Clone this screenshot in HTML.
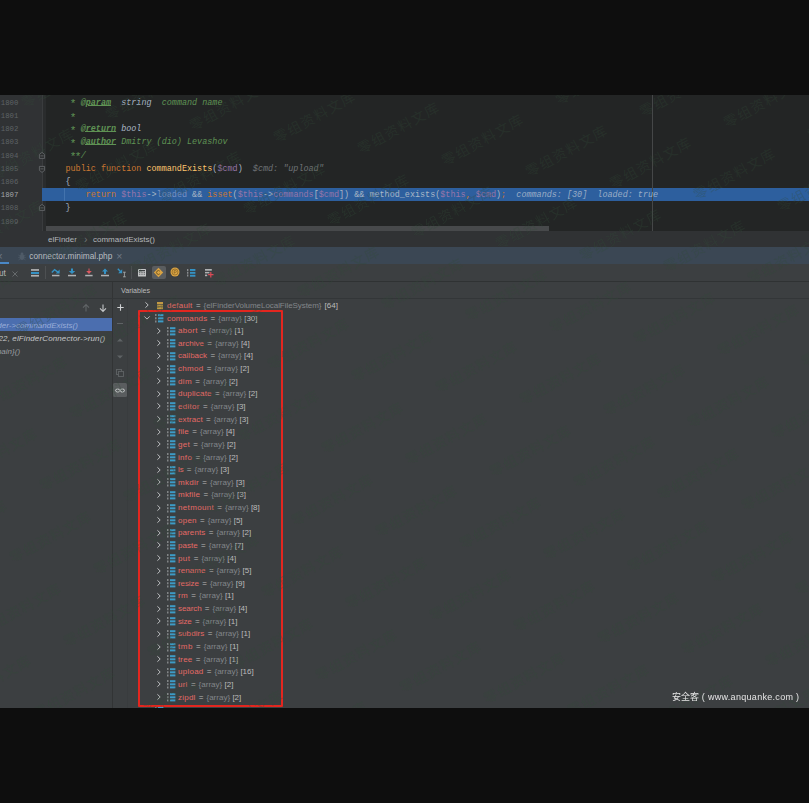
<!DOCTYPE html>
<html>
<head>
<meta charset="utf-8">
<title>debug</title>
<style>
html,body{margin:0;padding:0;}
body{width:809px;height:803px;background:#0e0e0e;position:relative;overflow:hidden;font-family:"Liberation Sans","Noto Sans CJK SC",sans-serif;}
.abs{position:absolute;}
#shot{position:absolute;left:0;top:95px;width:809px;height:613px;background:#3c3f41;overflow:hidden;filter:blur(0.35px);}
#editor{position:absolute;left:0;top:0;width:809px;height:136px;background:#232525;}
#gutter{position:absolute;left:0;top:0;width:41.5px;height:136px;background:#303234;border-right:1.3px solid #3a3c3e;}
.ln{position:absolute;left:0.8px;font:7.3px/13px "Liberation Mono",monospace;color:#5e6366;white-space:pre;height:13px;}
.code{position:absolute;left:45.2px;font:8.45px/13px "Liberation Mono",monospace;color:#a9b7c6;white-space:pre;height:13px;}
.g{color:#5f9354;font-style:italic;}
.tag{color:#5f9354;font-style:italic;font-weight:bold;text-decoration:underline;text-underline-offset:0.3px;text-decoration-thickness:0.8px;}
.st{position:relative;top:2.6px;font-style:normal;font-size:11px;display:inline-block;width:5.07px;line-height:8px;text-indent:-0.8px;}
.ty{color:#a9b7c6;font-style:italic;}
.k{color:#cc7832;}
.f{color:#ffc66d;}
.v{color:#9876aa;}
.h{color:#6f7376;font-style:italic;}
.hl{color:#9aadc6;font-style:italic;}
#hlrow{position:absolute;left:42px;top:93px;width:767px;height:13px;background:#2d5f9e;}
#margin{position:absolute;left:652px;top:0;width:1px;height:136px;background:#454748;}
#indent{position:absolute;left:64px;top:93px;width:1px;height:13px;background:#4373ad;}
#gstrip{position:absolute;left:42.8px;top:0;width:3.2px;height:136px;background:#2a2c2d;}
#hscroll{position:absolute;left:46px;top:131.4px;width:503px;height:4.6px;background:#47494b;}
#crumbs{position:absolute;left:0;top:136px;width:809px;height:16px;background:#303234;font-size:8px;line-height:18px;color:#b4b8bb;white-space:pre;}
#tabs{position:absolute;left:0;top:152px;width:809px;height:17px;background:#3b4754;font-size:8.3px;line-height:18.4px;color:#b9bdc1;white-space:pre;}
#toolbar{position:absolute;left:0;top:169px;width:809px;height:18px;background:#3c3f41;}
.row{position:absolute;font-size:8px;line-height:12px;height:12px;white-space:pre;color:#bbbbbb;word-spacing:1.2px;}
.row span{position:absolute;top:0;}
.n{color:#e56a66;}
.a{color:#82868a;}
.c{color:#bbbbbb;}
svg{position:absolute;overflow:visible;}
#wm{position:absolute;left:0;top:0;width:809px;height:613px;overflow:hidden;pointer-events:none;}
#wm span{position:absolute;font:14px/14px "Liberation Sans","Noto Sans CJK SC",sans-serif;letter-spacing:1.2px;color:rgba(50,76,56,0.3);white-space:pre;transform-origin:0 100%;transform:rotate(-28.6deg);}
</style>
</head>
<body>
<div id="shot">
<div id="editor">
<div id="gutter"></div>
<div id="gstrip"></div>
<div id="hlrow"></div>
<div id="margin"></div>
<div id="indent"></div>
<div class="ln" style="top:1.8px;color:#5e6366">1800</div>
<div class="code" style="top:1.8px">     <span class="g"><span class="st">*</span> </span><span class="tag">@param</span><span class="ty">  string  </span><span class="g">command name</span></div>
<div class="ln" style="top:15.0px;color:#5e6366">1801</div>
<div class="code" style="top:15.0px">     <span class="g"><span class="st">*</span></span></div>
<div class="ln" style="top:28.2px;color:#5e6366">1802</div>
<div class="code" style="top:28.2px">     <span class="g"><span class="st">*</span> </span><span class="tag">@return</span><span class="ty"> bool</span></div>
<div class="ln" style="top:41.4px;color:#5e6366">1803</div>
<div class="code" style="top:41.4px">     <span class="g"><span class="st">*</span> </span><span class="tag">@author</span><span class="g"> Dmitry (dio) Levashov</span></div>
<div class="ln" style="top:54.6px;color:#5e6366">1804</div>
<div class="code" style="top:54.6px">     <span class="g"><span class="st">*</span><span class="st">*</span>/</span></div>
<div class="ln" style="top:67.8px;color:#5e6366">1805</div>
<div class="code" style="top:67.8px">    <span class="k">public function </span><span class="f">commandExists</span>(<span class="v">$cmd</span>)  <span class="h">$cmd: "upload"</span></div>
<div class="ln" style="top:81.0px;color:#5e6366">1806</div>
<div class="code" style="top:81.0px">    {</div>
<div class="ln" style="top:94.2px;color:#a4a8ab">1807</div>
<div class="code" style="top:94.2px">        <span class="k">return </span><span class="v">$this</span>-&gt;<span style="color:#7a93c6">loaded</span> &amp;&amp; <span class="k">isset</span>(<span class="v">$this</span>-&gt;<span class="v">commands</span>[<span class="v">$cmd</span>]) &amp;&amp; method_exists(<span class="v">$this</span><span class="k">, </span><span class="v">$cmd</span>)<span class="k">;</span>  <span class="hl">commands: [30]  loaded: true</span></div>
<div class="ln" style="top:107.4px;color:#5e6366">1808</div>
<div class="code" style="top:107.4px">    }</div>
<div class="ln" style="top:120.6px;color:#5e6366">1809</div>
<svg style="left:39px;top:56.5px" width="6" height="7" viewBox="0 0 6 7"><path d="M0.4 6.4V2.4L3 0.4L5.6 2.4V6.4Z" fill="#2b2d2e" stroke="#6a6d70" stroke-width="0.8"/><path d="M1.4 3.9H4.6" stroke="#6a6d70" stroke-width="0.8"/></svg>
<svg style="left:39px;top:71px" width="6" height="7" viewBox="0 0 6 7"><path d="M0.4 0.4V4.4L3 6.4L5.6 4.4V0.4Z" fill="#2b2d2e" stroke="#6a6d70" stroke-width="0.8"/><path d="M1.4 2.9H4.6" stroke="#6a6d70" stroke-width="0.8"/></svg>
<svg style="left:39px;top:109.3px" width="6" height="7" viewBox="0 0 6 7"><path d="M0.4 6.4V2.4L3 0.4L5.6 2.4V6.4Z" fill="#2b2d2e" stroke="#6a6d70" stroke-width="0.8"/><path d="M1.4 3.9H4.6" stroke="#6a6d70" stroke-width="0.8"/></svg>
<div id="hscroll"></div>
</div>
<div id="crumbs"><span class="abs" style="left:48px">elFinder</span><span class="abs" style="left:84px;top:-1.4px;font-size:10.5px;color:#6e7275">›</span><span class="abs" style="left:93px">commandExists()</span></div>
<div id="tabs"><svg style="left:17.5px;top:4.5px" width="8" height="9" viewBox="0 0 8 9"><ellipse cx="4" cy="5" rx="2.3" ry="3" fill="#4f5b68"/><circle cx="4" cy="1.8" r="1.4" fill="#4f5b68"/><path d="M0.4 3L2 4M7.6 3L6 4M0.2 5.4H1.8M7.8 5.4H6.2M0.5 8L2 6.8M7.5 8L6 6.8" stroke="#4f5b68" stroke-width="0.7" fill="none"/></svg><span class="abs" style="left:29.3px">connector.minimal.php</span><span class="abs" style="left:116.3px;top:-0.3px;font-size:10.5px;color:#6f7984">×</span><span class="abs" style="left:-3.5px;top:-0.3px;font-size:10.5px;color:#6f7984">×</span><div class="abs" style="left:0;top:15px;width:9px;height:2px;background:#4a88c7"></div></div>
<div id="toolbar">
<div class="abs" style="left:0;top:17px;width:809px;height:1px;background:#2f3233"></div>
<span class="abs" style="left:-1px;top:3px;font-size:8.3px;line-height:12px;color:#bbbbbb">ut</span>
<svg style="left:12px;top:7px" width="6" height="6" viewBox="0 0 6 6"><path d="M0.5 0.5L5.5 5.5M5.5 0.5L0.5 5.5" stroke="#6b6f72" stroke-width="0.9" fill="none"/></svg>
<svg style="left:31px;top:5px" width="8" height="8" viewBox="0 0 8 8"><rect x="0" y="0.1" width="8" height="1.7" fill="#afb1b3"/><rect x="0" y="3" width="8" height="2" fill="#3592c4"/><rect x="0" y="5.9" width="8" height="1.7" fill="#afb1b3"/></svg>
<div class="abs" style="left:45px;top:2px;width:1px;height:13px;background:#4d5052"></div>
<svg style="left:51px;top:4px" width="10" height="9" viewBox="0 0 10 9"><path d="M0.8 4.6L3.6 1.6L7.6 4.6" stroke="#3592c4" stroke-width="1.4" fill="none"/><path d="M8.6 1.6V5.6H4.8Z" fill="#3592c4"/><rect x="1" y="6.8" width="7.5" height="1.5" fill="#afb1b3"/></svg>
<svg style="left:68px;top:4px" width="8" height="9" viewBox="0 0 8 9"><path d="M3 0.4H5V3H7.2L4 6L0.8 3H3Z" fill="#3592c4"/><rect x="0" y="6.8" width="8" height="1.5" fill="#afb1b3"/></svg>
<svg style="left:84.5px;top:4px" width="8" height="9" viewBox="0 0 8 9"><path d="M3.5 0.4H4.5V3H6.8L4 6L1.2 3H3.5Z" fill="#db5860"/><rect x="0.2" y="6.8" width="7.4" height="1.5" fill="#afb1b3"/></svg>
<svg style="left:101px;top:4px" width="8" height="9" viewBox="0 0 8 9"><path d="M3 6H5V3.4H7L4 0.4L1 3.4H3Z" fill="#3592c4"/><rect x="0" y="6.8" width="8" height="1.5" fill="#afb1b3"/></svg>
<svg style="left:117px;top:4px" width="10" height="10" viewBox="0 0 10 10"><path d="M0.8 0.8L4 4" stroke="#3592c4" stroke-width="1.4" fill="none"/><path d="M5.2 1.2V5.2H1.2Z" fill="#3592c4"/><path d="M6 4.2H8.8M6 8.8H8.8M7.4 4.2V8.8" stroke="#afb1b3" stroke-width="0.8" fill="none"/></svg>
<div class="abs" style="left:131.3px;top:2px;width:1px;height:13px;background:#4d5052"></div>
<svg style="left:138px;top:5px" width="8" height="8" viewBox="0 0 8 8"><rect x="0" y="0" width="8" height="7.6" rx="0.6" fill="#c3c5c6"/><rect x="1" y="1" width="6" height="1.2" fill="#3c3f41"/><path d="M1 3.4H7M1 5.2H7" stroke="#3c3f41" stroke-width="0.7" stroke-dasharray="1.4 0.9"/></svg>
<div class="abs" style="left:152px;top:2px;width:14px;height:13px;background:#5a5d5f;border-radius:2px"></div>
<svg style="left:153.2px;top:2.9px" width="11" height="11" viewBox="0 0 11 11"><path d="M5.5 0.8L10.2 5.5L5.5 10.2L0.8 5.5Z" fill="#d9a343"/><path d="M6.8 4.2A1.9 1.9 0 1 0 6.8 6.8" stroke="#6b5222" stroke-width="0.9" fill="none"/></svg>
<svg style="left:170.4px;top:3.4px" width="10" height="10" viewBox="0 0 10 10"><circle cx="5" cy="5" r="4.5" fill="#d9a343"/><circle cx="5" cy="5" r="3" fill="none" stroke="#8a6626" stroke-width="0.7"/><path d="M4.2 6.8V3.4H5.4A1 1 0 0 1 5.4 5.4H4.2" stroke="#8a6626" stroke-width="0.7" fill="none"/></svg>
<svg style="left:187px;top:4.5px" width="9" height="8" viewBox="0 0 9 8"><path d="M0.7 0V7.6" stroke="#8e9193" stroke-width="1.3" stroke-dasharray="1.9 0.9"/><rect x="3" y="0" width="5.4" height="1.9" fill="#3592c4"/><rect x="3" y="2.9" width="5.4" height="1.9" fill="#3592c4"/><rect x="3" y="5.8" width="5.4" height="1.9" fill="#3592c4"/></svg>
<svg style="left:204.5px;top:5px" width="10" height="9" viewBox="0 0 10 9"><rect x="0" y="0" width="6.8" height="1.7" fill="#afb1b3"/><rect x="0" y="2.9" width="4.4" height="1.5" fill="#afb1b3"/><rect x="0" y="5.6" width="2.2" height="1.6" fill="#afb1b3"/><path d="M5.8 3V8.4M3.1 5.7H8.5" stroke="#db4a55" stroke-width="1.2" fill="none"/></svg>
</div>
<div class="abs" style="left:121px;top:190px;font-size:7.1px;line-height:12px;color:#bbbbbb">Variables</div>
<div class="abs" style="left:112px;top:187px;width:1px;height:426px;background:#323435"></div>
<div class="abs" style="left:0;top:203px;width:809px;height:1px;background:#333638"></div>
<div class="abs" style="left:127px;top:204px;width:1px;height:409px;background:#393c3e"></div>
<svg style="left:82px;top:208.5px" width="8" height="8" viewBox="0 0 8 8"><path d="M4 7.6V0.8M1 3.6L4 0.6L7 3.6" stroke="#606466" stroke-width="1.1" fill="none"/></svg>
<svg style="left:98.5px;top:208.5px" width="8" height="8" viewBox="0 0 8 8"><path d="M4 0.4V7.2M1 4.4L4 7.4L7 4.4" stroke="#c4c6c8" stroke-width="1.1" fill="none"/></svg>
<svg style="left:116.5px;top:209px" width="7" height="7" viewBox="0 0 7 7"><path d="M3.5 0.3V6.7M0.3 3.5H6.7" stroke="#d0d2d4" stroke-width="1.1" fill="none"/></svg>
<div class="abs" style="left:117px;top:228.3px;width:6px;height:1px;background:#5f6365"></div>
<svg style="left:117px;top:242.8px" width="6" height="4" viewBox="0 0 6 4"><path d="M0 3.6L3 0.4L6 3.6Z" fill="#5f6365"/></svg>
<svg style="left:117px;top:259.5px" width="6" height="4" viewBox="0 0 6 4"><path d="M0 0.4L3 3.6L6 0.4Z" fill="#5f6365"/></svg>
<svg style="left:116px;top:274px" width="8" height="8" viewBox="0 0 8 8"><rect x="0.5" y="0.5" width="5" height="5" fill="none" stroke="#5f6365" stroke-width="0.9"/><rect x="2.5" y="2.5" width="5" height="5" fill="#3c3f41" stroke="#5f6365" stroke-width="0.9"/></svg>
<div class="abs" style="left:113.3px;top:288px;width:13.5px;height:13.5px;background:#5a5d5f;border-radius:1.5px"></div>
<svg style="left:115px;top:292.5px" width="10" height="5" viewBox="0 0 10 5"><ellipse cx="2.6" cy="2.5" rx="2" ry="1.6" fill="none" stroke="#d0d2d4" stroke-width="1"/><ellipse cx="7.4" cy="2.5" rx="2" ry="1.6" fill="none" stroke="#d0d2d4" stroke-width="1"/></svg>
<div class="abs" style="left:0;top:223px;width:112px;height:13px;background:#4b6eaf"></div>
<div class="abs" style="left:-2.7px;top:223.6px;font-size:8px;line-height:13px;color:#99add8;font-style:italic;white-space:pre">der-&gt;commandExists()</div>
<div class="abs" style="left:-1.5px;top:236.8px;font-size:8px;line-height:13px;color:#c4c6c8;font-style:italic;white-space:pre;letter-spacing:0.124px">22, elFinderConnector-&gt;run()</div>
<div class="abs" style="left:-5.3px;top:250px;font-size:8px;line-height:13px;color:#9a9da0;font-style:italic;white-space:pre">main}()</div>
<svg style="left:144.6px;top:207.0px" width="4" height="6" viewBox="0 0 4 6"><path d="M0.4 0.3L3.2 3L0.4 5.7" stroke="#bcbec0" stroke-width="1" fill="none"/></svg>
<svg style="left:157px;top:206.9px" width="6" height="8" viewBox="0 0 6 8"><rect x="0" y="0" width="6" height="2" fill="#c29a44"/><rect x="0" y="2.6" width="6" height="2" fill="#c29a44"/><rect x="0" y="5.2" width="6" height="2" fill="#c29a44"/></svg>
<div class="row" style="left:0;top:204.5px"><span class="n" style="left:167px;letter-spacing:0.220px">default</span><span class="c" style="left:195.9px">=</span><span class="a" style="left:203.6px;letter-spacing:-0.056px">{elFinderVolumeLocalFileSystem}</span><span class="c" style="left:324.6px">[64]</span></div>
<svg style="left:144px;top:220.6px" width="6" height="4" viewBox="0 0 6 4"><path d="M0.3 0.4L3 3.1L5.7 0.4" stroke="#bcbec0" stroke-width="1" fill="none"/></svg>
<svg style="left:155.2px;top:219.0px" width="9" height="9" viewBox="0 0 9 9"><path d="M0.8 0V8.6" stroke="#8e9193" stroke-width="1.3" stroke-dasharray="2 1.2"/><rect x="3" y="0.2" width="5.4" height="2" fill="#3d9bc6"/><rect x="3" y="3.3" width="5.4" height="2" fill="#3d9bc6"/><rect x="3" y="6.4" width="5.4" height="2" fill="#3d9bc6"/></svg>
<div class="row" style="left:0;top:217.5px"><span class="n" style="left:167px;letter-spacing:0.148px">commands</span><span class="c" style="left:210.6px">=</span><span class="a" style="left:218.3px;letter-spacing:0.000px">{array}</span><span class="c" style="left:244.2px">[30]</span></div>
<svg style="left:156.6px;top:232.6px" width="4" height="6" viewBox="0 0 4 6"><path d="M0.4 0.3L3.2 3L0.4 5.7" stroke="#bcbec0" stroke-width="1" fill="none"/></svg>
<svg style="left:167px;top:231.6px" width="9" height="9" viewBox="0 0 9 9"><path d="M0.8 0V8.6" stroke="#8e9193" stroke-width="1.3" stroke-dasharray="2 1.2"/><rect x="3" y="0.2" width="5.4" height="2" fill="#3d9bc6"/><rect x="3" y="3.3" width="5.4" height="2" fill="#3d9bc6"/><rect x="3" y="6.4" width="5.4" height="2" fill="#3d9bc6"/></svg>
<div class="row" style="left:0;top:230.1px"><span class="n" style="left:178px;letter-spacing:0.288px">abort</span><span class="c" style="left:201.0px">=</span><span class="a" style="left:208.7px;letter-spacing:0.000px">{array}</span><span class="c" style="left:234.6px">[1]</span></div>
<svg style="left:156.6px;top:245.3px" width="4" height="6" viewBox="0 0 4 6"><path d="M0.4 0.3L3.2 3L0.4 5.7" stroke="#bcbec0" stroke-width="1" fill="none"/></svg>
<svg style="left:167px;top:244.3px" width="9" height="9" viewBox="0 0 9 9"><path d="M0.8 0V8.6" stroke="#8e9193" stroke-width="1.3" stroke-dasharray="2 1.2"/><rect x="3" y="0.2" width="5.4" height="2" fill="#3d9bc6"/><rect x="3" y="3.3" width="5.4" height="2" fill="#3d9bc6"/><rect x="3" y="6.4" width="5.4" height="2" fill="#3d9bc6"/></svg>
<div class="row" style="left:0;top:242.8px"><span class="n" style="left:178px;letter-spacing:0.025px">archive</span><span class="c" style="left:207.3px">=</span><span class="a" style="left:215.0px;letter-spacing:0.000px">{array}</span><span class="c" style="left:240.9px">[4]</span></div>
<svg style="left:156.6px;top:257.9px" width="4" height="6" viewBox="0 0 4 6"><path d="M0.4 0.3L3.2 3L0.4 5.7" stroke="#bcbec0" stroke-width="1" fill="none"/></svg>
<svg style="left:167px;top:256.9px" width="9" height="9" viewBox="0 0 9 9"><path d="M0.8 0V8.6" stroke="#8e9193" stroke-width="1.3" stroke-dasharray="2 1.2"/><rect x="3" y="0.2" width="5.4" height="2" fill="#3d9bc6"/><rect x="3" y="3.3" width="5.4" height="2" fill="#3d9bc6"/><rect x="3" y="6.4" width="5.4" height="2" fill="#3d9bc6"/></svg>
<div class="row" style="left:0;top:255.4px"><span class="n" style="left:178px;letter-spacing:0.031px">callback</span><span class="c" style="left:210.4px">=</span><span class="a" style="left:218.1px;letter-spacing:0.000px">{array}</span><span class="c" style="left:244.0px">[4]</span></div>
<svg style="left:156.6px;top:270.5px" width="4" height="6" viewBox="0 0 4 6"><path d="M0.4 0.3L3.2 3L0.4 5.7" stroke="#bcbec0" stroke-width="1" fill="none"/></svg>
<svg style="left:167px;top:269.5px" width="9" height="9" viewBox="0 0 9 9"><path d="M0.8 0V8.6" stroke="#8e9193" stroke-width="1.3" stroke-dasharray="2 1.2"/><rect x="3" y="0.2" width="5.4" height="2" fill="#3d9bc6"/><rect x="3" y="3.3" width="5.4" height="2" fill="#3d9bc6"/><rect x="3" y="6.4" width="5.4" height="2" fill="#3d9bc6"/></svg>
<div class="row" style="left:0;top:268.0px"><span class="n" style="left:178px;letter-spacing:0.281px">chmod</span><span class="c" style="left:206.7px">=</span><span class="a" style="left:214.4px;letter-spacing:0.000px">{array}</span><span class="c" style="left:240.3px">[2]</span></div>
<svg style="left:156.6px;top:283.2px" width="4" height="6" viewBox="0 0 4 6"><path d="M0.4 0.3L3.2 3L0.4 5.7" stroke="#bcbec0" stroke-width="1" fill="none"/></svg>
<svg style="left:167px;top:282.2px" width="9" height="9" viewBox="0 0 9 9"><path d="M0.8 0V8.6" stroke="#8e9193" stroke-width="1.3" stroke-dasharray="2 1.2"/><rect x="3" y="0.2" width="5.4" height="2" fill="#3d9bc6"/><rect x="3" y="3.3" width="5.4" height="2" fill="#3d9bc6"/><rect x="3" y="6.4" width="5.4" height="2" fill="#3d9bc6"/></svg>
<div class="row" style="left:0;top:280.7px"><span class="n" style="left:178px;letter-spacing:0.382px">dim</span><span class="c" style="left:195.3px">=</span><span class="a" style="left:203.0px;letter-spacing:0.000px">{array}</span><span class="c" style="left:228.9px">[2]</span></div>
<svg style="left:156.6px;top:295.8px" width="4" height="6" viewBox="0 0 4 6"><path d="M0.4 0.3L3.2 3L0.4 5.7" stroke="#bcbec0" stroke-width="1" fill="none"/></svg>
<svg style="left:167px;top:294.8px" width="9" height="9" viewBox="0 0 9 9"><path d="M0.8 0V8.6" stroke="#8e9193" stroke-width="1.3" stroke-dasharray="2 1.2"/><rect x="3" y="0.2" width="5.4" height="2" fill="#3d9bc6"/><rect x="3" y="3.3" width="5.4" height="2" fill="#3d9bc6"/><rect x="3" y="6.4" width="5.4" height="2" fill="#3d9bc6"/></svg>
<div class="row" style="left:0;top:293.3px"><span class="n" style="left:178px;letter-spacing:0.185px">duplicate</span><span class="c" style="left:215.0px">=</span><span class="a" style="left:222.7px;letter-spacing:0.000px">{array}</span><span class="c" style="left:248.6px">[2]</span></div>
<svg style="left:156.6px;top:308.4px" width="4" height="6" viewBox="0 0 4 6"><path d="M0.4 0.3L3.2 3L0.4 5.7" stroke="#bcbec0" stroke-width="1" fill="none"/></svg>
<svg style="left:167px;top:307.4px" width="9" height="9" viewBox="0 0 9 9"><path d="M0.8 0V8.6" stroke="#8e9193" stroke-width="1.3" stroke-dasharray="2 1.2"/><rect x="3" y="0.2" width="5.4" height="2" fill="#3d9bc6"/><rect x="3" y="3.3" width="5.4" height="2" fill="#3d9bc6"/><rect x="3" y="6.4" width="5.4" height="2" fill="#3d9bc6"/></svg>
<div class="row" style="left:0;top:305.9px"><span class="n" style="left:178px;letter-spacing:0.298px">editor</span><span class="c" style="left:203.1px">=</span><span class="a" style="left:210.8px;letter-spacing:0.000px">{array}</span><span class="c" style="left:236.7px">[3]</span></div>
<svg style="left:156.6px;top:321.1px" width="4" height="6" viewBox="0 0 4 6"><path d="M0.4 0.3L3.2 3L0.4 5.7" stroke="#bcbec0" stroke-width="1" fill="none"/></svg>
<svg style="left:167px;top:320.1px" width="9" height="9" viewBox="0 0 9 9"><path d="M0.8 0V8.6" stroke="#8e9193" stroke-width="1.3" stroke-dasharray="2 1.2"/><rect x="3" y="0.2" width="5.4" height="2" fill="#3d9bc6"/><rect x="3" y="3.3" width="5.4" height="2" fill="#3d9bc6"/><rect x="3" y="6.4" width="5.4" height="2" fill="#3d9bc6"/></svg>
<div class="row" style="left:0;top:318.6px"><span class="n" style="left:178px;letter-spacing:0.103px">extract</span><span class="c" style="left:206.0px">=</span><span class="a" style="left:213.7px;letter-spacing:0.000px">{array}</span><span class="c" style="left:239.6px">[3]</span></div>
<svg style="left:156.6px;top:333.7px" width="4" height="6" viewBox="0 0 4 6"><path d="M0.4 0.3L3.2 3L0.4 5.7" stroke="#bcbec0" stroke-width="1" fill="none"/></svg>
<svg style="left:167px;top:332.7px" width="9" height="9" viewBox="0 0 9 9"><path d="M0.8 0V8.6" stroke="#8e9193" stroke-width="1.3" stroke-dasharray="2 1.2"/><rect x="3" y="0.2" width="5.4" height="2" fill="#3d9bc6"/><rect x="3" y="3.3" width="5.4" height="2" fill="#3d9bc6"/><rect x="3" y="6.4" width="5.4" height="2" fill="#3d9bc6"/></svg>
<div class="row" style="left:0;top:331.2px"><span class="n" style="left:178px;letter-spacing:0.183px">file</span><span class="c" style="left:192.3px">=</span><span class="a" style="left:200.0px;letter-spacing:0.000px">{array}</span><span class="c" style="left:225.9px">[4]</span></div>
<svg style="left:156.6px;top:346.3px" width="4" height="6" viewBox="0 0 4 6"><path d="M0.4 0.3L3.2 3L0.4 5.7" stroke="#bcbec0" stroke-width="1" fill="none"/></svg>
<svg style="left:167px;top:345.3px" width="9" height="9" viewBox="0 0 9 9"><path d="M0.8 0V8.6" stroke="#8e9193" stroke-width="1.3" stroke-dasharray="2 1.2"/><rect x="3" y="0.2" width="5.4" height="2" fill="#3d9bc6"/><rect x="3" y="3.3" width="5.4" height="2" fill="#3d9bc6"/><rect x="3" y="6.4" width="5.4" height="2" fill="#3d9bc6"/></svg>
<div class="row" style="left:0;top:343.8px"><span class="n" style="left:178px;letter-spacing:0.305px">get</span><span class="c" style="left:193.3px">=</span><span class="a" style="left:201.0px;letter-spacing:0.000px">{array}</span><span class="c" style="left:226.9px">[2]</span></div>
<svg style="left:156.6px;top:359.0px" width="4" height="6" viewBox="0 0 4 6"><path d="M0.4 0.3L3.2 3L0.4 5.7" stroke="#bcbec0" stroke-width="1" fill="none"/></svg>
<svg style="left:167px;top:358.0px" width="9" height="9" viewBox="0 0 9 9"><path d="M0.8 0V8.6" stroke="#8e9193" stroke-width="1.3" stroke-dasharray="2 1.2"/><rect x="3" y="0.2" width="5.4" height="2" fill="#3d9bc6"/><rect x="3" y="3.3" width="5.4" height="2" fill="#3d9bc6"/><rect x="3" y="6.4" width="5.4" height="2" fill="#3d9bc6"/></svg>
<div class="row" style="left:0;top:356.5px"><span class="n" style="left:178px;letter-spacing:0.316px">info</span><span class="c" style="left:195.5px">=</span><span class="a" style="left:203.2px;letter-spacing:0.000px">{array}</span><span class="c" style="left:229.1px">[2]</span></div>
<svg style="left:156.6px;top:371.6px" width="4" height="6" viewBox="0 0 4 6"><path d="M0.4 0.3L3.2 3L0.4 5.7" stroke="#bcbec0" stroke-width="1" fill="none"/></svg>
<svg style="left:167px;top:370.6px" width="9" height="9" viewBox="0 0 9 9"><path d="M0.8 0V8.6" stroke="#8e9193" stroke-width="1.3" stroke-dasharray="2 1.2"/><rect x="3" y="0.2" width="5.4" height="2" fill="#3d9bc6"/><rect x="3" y="3.3" width="5.4" height="2" fill="#3d9bc6"/><rect x="3" y="6.4" width="5.4" height="2" fill="#3d9bc6"/></svg>
<div class="row" style="left:0;top:369.1px"><span class="n" style="left:178px;letter-spacing:-0.124px">ls</span><span class="c" style="left:186.8px">=</span><span class="a" style="left:194.5px;letter-spacing:0.000px">{array}</span><span class="c" style="left:220.4px">[3]</span></div>
<svg style="left:156.6px;top:384.2px" width="4" height="6" viewBox="0 0 4 6"><path d="M0.4 0.3L3.2 3L0.4 5.7" stroke="#bcbec0" stroke-width="1" fill="none"/></svg>
<svg style="left:167px;top:383.2px" width="9" height="9" viewBox="0 0 9 9"><path d="M0.8 0V8.6" stroke="#8e9193" stroke-width="1.3" stroke-dasharray="2 1.2"/><rect x="3" y="0.2" width="5.4" height="2" fill="#3d9bc6"/><rect x="3" y="3.3" width="5.4" height="2" fill="#3d9bc6"/><rect x="3" y="6.4" width="5.4" height="2" fill="#3d9bc6"/></svg>
<div class="row" style="left:0;top:381.7px"><span class="n" style="left:178px;letter-spacing:0.299px">mkdir</span><span class="c" style="left:202.3px">=</span><span class="a" style="left:210.0px;letter-spacing:0.000px">{array}</span><span class="c" style="left:235.9px">[3]</span></div>
<svg style="left:156.6px;top:396.9px" width="4" height="6" viewBox="0 0 4 6"><path d="M0.4 0.3L3.2 3L0.4 5.7" stroke="#bcbec0" stroke-width="1" fill="none"/></svg>
<svg style="left:167px;top:395.9px" width="9" height="9" viewBox="0 0 9 9"><path d="M0.8 0V8.6" stroke="#8e9193" stroke-width="1.3" stroke-dasharray="2 1.2"/><rect x="3" y="0.2" width="5.4" height="2" fill="#3d9bc6"/><rect x="3" y="3.3" width="5.4" height="2" fill="#3d9bc6"/><rect x="3" y="6.4" width="5.4" height="2" fill="#3d9bc6"/></svg>
<div class="row" style="left:0;top:394.4px"><span class="n" style="left:178px;letter-spacing:0.223px">mkfile</span><span class="c" style="left:203.5px">=</span><span class="a" style="left:211.2px;letter-spacing:0.000px">{array}</span><span class="c" style="left:237.1px">[3]</span></div>
<svg style="left:156.6px;top:409.5px" width="4" height="6" viewBox="0 0 4 6"><path d="M0.4 0.3L3.2 3L0.4 5.7" stroke="#bcbec0" stroke-width="1" fill="none"/></svg>
<svg style="left:167px;top:408.5px" width="9" height="9" viewBox="0 0 9 9"><path d="M0.8 0V8.6" stroke="#8e9193" stroke-width="1.3" stroke-dasharray="2 1.2"/><rect x="3" y="0.2" width="5.4" height="2" fill="#3d9bc6"/><rect x="3" y="3.3" width="5.4" height="2" fill="#3d9bc6"/><rect x="3" y="6.4" width="5.4" height="2" fill="#3d9bc6"/></svg>
<div class="row" style="left:0;top:407.0px"><span class="n" style="left:178px;letter-spacing:0.337px">netmount</span><span class="c" style="left:217.3px">=</span><span class="a" style="left:225.0px;letter-spacing:0.000px">{array}</span><span class="c" style="left:250.9px">[8]</span></div>
<svg style="left:156.6px;top:422.1px" width="4" height="6" viewBox="0 0 4 6"><path d="M0.4 0.3L3.2 3L0.4 5.7" stroke="#bcbec0" stroke-width="1" fill="none"/></svg>
<svg style="left:167px;top:421.1px" width="9" height="9" viewBox="0 0 9 9"><path d="M0.8 0V8.6" stroke="#8e9193" stroke-width="1.3" stroke-dasharray="2 1.2"/><rect x="3" y="0.2" width="5.4" height="2" fill="#3d9bc6"/><rect x="3" y="3.3" width="5.4" height="2" fill="#3d9bc6"/><rect x="3" y="6.4" width="5.4" height="2" fill="#3d9bc6"/></svg>
<div class="row" style="left:0;top:419.6px"><span class="n" style="left:178px;letter-spacing:0.246px">open</span><span class="c" style="left:200.1px">=</span><span class="a" style="left:207.8px;letter-spacing:0.000px">{array}</span><span class="c" style="left:233.7px">[5]</span></div>
<svg style="left:156.6px;top:434.8px" width="4" height="6" viewBox="0 0 4 6"><path d="M0.4 0.3L3.2 3L0.4 5.7" stroke="#bcbec0" stroke-width="1" fill="none"/></svg>
<svg style="left:167px;top:433.8px" width="9" height="9" viewBox="0 0 9 9"><path d="M0.8 0V8.6" stroke="#8e9193" stroke-width="1.3" stroke-dasharray="2 1.2"/><rect x="3" y="0.2" width="5.4" height="2" fill="#3d9bc6"/><rect x="3" y="3.3" width="5.4" height="2" fill="#3d9bc6"/><rect x="3" y="6.4" width="5.4" height="2" fill="#3d9bc6"/></svg>
<div class="row" style="left:0;top:432.3px"><span class="n" style="left:178px;letter-spacing:0.097px">parents</span><span class="c" style="left:208.7px">=</span><span class="a" style="left:216.4px;letter-spacing:0.000px">{array}</span><span class="c" style="left:242.3px">[2]</span></div>
<svg style="left:156.6px;top:447.4px" width="4" height="6" viewBox="0 0 4 6"><path d="M0.4 0.3L3.2 3L0.4 5.7" stroke="#bcbec0" stroke-width="1" fill="none"/></svg>
<svg style="left:167px;top:446.4px" width="9" height="9" viewBox="0 0 9 9"><path d="M0.8 0V8.6" stroke="#8e9193" stroke-width="1.3" stroke-dasharray="2 1.2"/><rect x="3" y="0.2" width="5.4" height="2" fill="#3d9bc6"/><rect x="3" y="3.3" width="5.4" height="2" fill="#3d9bc6"/><rect x="3" y="6.4" width="5.4" height="2" fill="#3d9bc6"/></svg>
<div class="row" style="left:0;top:444.9px"><span class="n" style="left:178px;letter-spacing:0.042px">paste</span><span class="c" style="left:201.1px">=</span><span class="a" style="left:208.8px;letter-spacing:0.000px">{array}</span><span class="c" style="left:234.7px">[7]</span></div>
<svg style="left:156.6px;top:460.0px" width="4" height="6" viewBox="0 0 4 6"><path d="M0.4 0.3L3.2 3L0.4 5.7" stroke="#bcbec0" stroke-width="1" fill="none"/></svg>
<svg style="left:167px;top:459.0px" width="9" height="9" viewBox="0 0 9 9"><path d="M0.8 0V8.6" stroke="#8e9193" stroke-width="1.3" stroke-dasharray="2 1.2"/><rect x="3" y="0.2" width="5.4" height="2" fill="#3d9bc6"/><rect x="3" y="3.3" width="5.4" height="2" fill="#3d9bc6"/><rect x="3" y="6.4" width="5.4" height="2" fill="#3d9bc6"/></svg>
<div class="row" style="left:0;top:457.5px"><span class="n" style="left:178px;letter-spacing:0.421px">put</span><span class="c" style="left:193.7px">=</span><span class="a" style="left:201.4px;letter-spacing:0.000px">{array}</span><span class="c" style="left:227.3px">[4]</span></div>
<svg style="left:156.6px;top:472.7px" width="4" height="6" viewBox="0 0 4 6"><path d="M0.4 0.3L3.2 3L0.4 5.7" stroke="#bcbec0" stroke-width="1" fill="none"/></svg>
<svg style="left:167px;top:471.7px" width="9" height="9" viewBox="0 0 9 9"><path d="M0.8 0V8.6" stroke="#8e9193" stroke-width="1.3" stroke-dasharray="2 1.2"/><rect x="3" y="0.2" width="5.4" height="2" fill="#3d9bc6"/><rect x="3" y="3.3" width="5.4" height="2" fill="#3d9bc6"/><rect x="3" y="6.4" width="5.4" height="2" fill="#3d9bc6"/></svg>
<div class="row" style="left:0;top:470.2px"><span class="n" style="left:178px;letter-spacing:0.085px">rename</span><span class="c" style="left:208.9px">=</span><span class="a" style="left:216.6px;letter-spacing:0.000px">{array}</span><span class="c" style="left:242.5px">[5]</span></div>
<svg style="left:156.6px;top:485.3px" width="4" height="6" viewBox="0 0 4 6"><path d="M0.4 0.3L3.2 3L0.4 5.7" stroke="#bcbec0" stroke-width="1" fill="none"/></svg>
<svg style="left:167px;top:484.3px" width="9" height="9" viewBox="0 0 9 9"><path d="M0.8 0V8.6" stroke="#8e9193" stroke-width="1.3" stroke-dasharray="2 1.2"/><rect x="3" y="0.2" width="5.4" height="2" fill="#3d9bc6"/><rect x="3" y="3.3" width="5.4" height="2" fill="#3d9bc6"/><rect x="3" y="6.4" width="5.4" height="2" fill="#3d9bc6"/></svg>
<div class="row" style="left:0;top:482.8px"><span class="n" style="left:178px;letter-spacing:-0.080px">resize</span><span class="c" style="left:202.2px">=</span><span class="a" style="left:209.9px;letter-spacing:0.000px">{array}</span><span class="c" style="left:235.8px">[9]</span></div>
<svg style="left:156.6px;top:497.9px" width="4" height="6" viewBox="0 0 4 6"><path d="M0.4 0.3L3.2 3L0.4 5.7" stroke="#bcbec0" stroke-width="1" fill="none"/></svg>
<svg style="left:167px;top:496.9px" width="9" height="9" viewBox="0 0 9 9"><path d="M0.8 0V8.6" stroke="#8e9193" stroke-width="1.3" stroke-dasharray="2 1.2"/><rect x="3" y="0.2" width="5.4" height="2" fill="#3d9bc6"/><rect x="3" y="3.3" width="5.4" height="2" fill="#3d9bc6"/><rect x="3" y="6.4" width="5.4" height="2" fill="#3d9bc6"/></svg>
<div class="row" style="left:0;top:495.4px"><span class="n" style="left:178px;letter-spacing:0.353px">rm</span><span class="c" style="left:191.3px">=</span><span class="a" style="left:199.0px;letter-spacing:0.000px">{array}</span><span class="c" style="left:224.9px">[1]</span></div>
<svg style="left:156.6px;top:510.6px" width="4" height="6" viewBox="0 0 4 6"><path d="M0.4 0.3L3.2 3L0.4 5.7" stroke="#bcbec0" stroke-width="1" fill="none"/></svg>
<svg style="left:167px;top:509.6px" width="9" height="9" viewBox="0 0 9 9"><path d="M0.8 0V8.6" stroke="#8e9193" stroke-width="1.3" stroke-dasharray="2 1.2"/><rect x="3" y="0.2" width="5.4" height="2" fill="#3d9bc6"/><rect x="3" y="3.3" width="5.4" height="2" fill="#3d9bc6"/><rect x="3" y="6.4" width="5.4" height="2" fill="#3d9bc6"/></svg>
<div class="row" style="left:0;top:508.1px"><span class="n" style="left:178px;letter-spacing:-0.085px">search</span><span class="c" style="left:204.8px">=</span><span class="a" style="left:212.5px;letter-spacing:0.000px">{array}</span><span class="c" style="left:238.4px">[4]</span></div>
<svg style="left:156.6px;top:523.2px" width="4" height="6" viewBox="0 0 4 6"><path d="M0.4 0.3L3.2 3L0.4 5.7" stroke="#bcbec0" stroke-width="1" fill="none"/></svg>
<svg style="left:167px;top:522.2px" width="9" height="9" viewBox="0 0 9 9"><path d="M0.8 0V8.6" stroke="#8e9193" stroke-width="1.3" stroke-dasharray="2 1.2"/><rect x="3" y="0.2" width="5.4" height="2" fill="#3d9bc6"/><rect x="3" y="3.3" width="5.4" height="2" fill="#3d9bc6"/><rect x="3" y="6.4" width="5.4" height="2" fill="#3d9bc6"/></svg>
<div class="row" style="left:0;top:520.7px"><span class="n" style="left:178px;letter-spacing:-0.149px">size</span><span class="c" style="left:194.9px">=</span><span class="a" style="left:202.6px;letter-spacing:0.000px">{array}</span><span class="c" style="left:228.5px">[1]</span></div>
<svg style="left:156.6px;top:535.8px" width="4" height="6" viewBox="0 0 4 6"><path d="M0.4 0.3L3.2 3L0.4 5.7" stroke="#bcbec0" stroke-width="1" fill="none"/></svg>
<svg style="left:167px;top:534.8px" width="9" height="9" viewBox="0 0 9 9"><path d="M0.8 0V8.6" stroke="#8e9193" stroke-width="1.3" stroke-dasharray="2 1.2"/><rect x="3" y="0.2" width="5.4" height="2" fill="#3d9bc6"/><rect x="3" y="3.3" width="5.4" height="2" fill="#3d9bc6"/><rect x="3" y="6.4" width="5.4" height="2" fill="#3d9bc6"/></svg>
<div class="row" style="left:0;top:533.3px"><span class="n" style="left:178px;letter-spacing:0.086px">subdirs</span><span class="c" style="left:207.7px">=</span><span class="a" style="left:215.4px;letter-spacing:0.000px">{array}</span><span class="c" style="left:241.3px">[1]</span></div>
<svg style="left:156.6px;top:548.5px" width="4" height="6" viewBox="0 0 4 6"><path d="M0.4 0.3L3.2 3L0.4 5.7" stroke="#bcbec0" stroke-width="1" fill="none"/></svg>
<svg style="left:167px;top:547.5px" width="9" height="9" viewBox="0 0 9 9"><path d="M0.8 0V8.6" stroke="#8e9193" stroke-width="1.3" stroke-dasharray="2 1.2"/><rect x="3" y="0.2" width="5.4" height="2" fill="#3d9bc6"/><rect x="3" y="3.3" width="5.4" height="2" fill="#3d9bc6"/><rect x="3" y="6.4" width="5.4" height="2" fill="#3d9bc6"/></svg>
<div class="row" style="left:0;top:546.0px"><span class="n" style="left:178px;letter-spacing:0.501px">tmb</span><span class="c" style="left:196.1px">=</span><span class="a" style="left:203.8px;letter-spacing:0.000px">{array}</span><span class="c" style="left:229.7px">[1]</span></div>
<svg style="left:156.6px;top:561.1px" width="4" height="6" viewBox="0 0 4 6"><path d="M0.4 0.3L3.2 3L0.4 5.7" stroke="#bcbec0" stroke-width="1" fill="none"/></svg>
<svg style="left:167px;top:560.1px" width="9" height="9" viewBox="0 0 9 9"><path d="M0.8 0V8.6" stroke="#8e9193" stroke-width="1.3" stroke-dasharray="2 1.2"/><rect x="3" y="0.2" width="5.4" height="2" fill="#3d9bc6"/><rect x="3" y="3.3" width="5.4" height="2" fill="#3d9bc6"/><rect x="3" y="6.4" width="5.4" height="2" fill="#3d9bc6"/></svg>
<div class="row" style="left:0;top:558.6px"><span class="n" style="left:178px;letter-spacing:0.150px">tree</span><span class="c" style="left:195.7px">=</span><span class="a" style="left:203.4px;letter-spacing:0.000px">{array}</span><span class="c" style="left:229.3px">[1]</span></div>
<svg style="left:156.6px;top:573.7px" width="4" height="6" viewBox="0 0 4 6"><path d="M0.4 0.3L3.2 3L0.4 5.7" stroke="#bcbec0" stroke-width="1" fill="none"/></svg>
<svg style="left:167px;top:572.7px" width="9" height="9" viewBox="0 0 9 9"><path d="M0.8 0V8.6" stroke="#8e9193" stroke-width="1.3" stroke-dasharray="2 1.2"/><rect x="3" y="0.2" width="5.4" height="2" fill="#3d9bc6"/><rect x="3" y="3.3" width="5.4" height="2" fill="#3d9bc6"/><rect x="3" y="6.4" width="5.4" height="2" fill="#3d9bc6"/></svg>
<div class="row" style="left:0;top:571.2px"><span class="n" style="left:178px;letter-spacing:0.255px">upload</span><span class="c" style="left:206.8px">=</span><span class="a" style="left:214.5px;letter-spacing:0.000px">{array}</span><span class="c" style="left:240.4px">[16]</span></div>
<svg style="left:156.6px;top:586.4px" width="4" height="6" viewBox="0 0 4 6"><path d="M0.4 0.3L3.2 3L0.4 5.7" stroke="#bcbec0" stroke-width="1" fill="none"/></svg>
<svg style="left:167px;top:585.4px" width="9" height="9" viewBox="0 0 9 9"><path d="M0.8 0V8.6" stroke="#8e9193" stroke-width="1.3" stroke-dasharray="2 1.2"/><rect x="3" y="0.2" width="5.4" height="2" fill="#3d9bc6"/><rect x="3" y="3.3" width="5.4" height="2" fill="#3d9bc6"/><rect x="3" y="6.4" width="5.4" height="2" fill="#3d9bc6"/></svg>
<div class="row" style="left:0;top:583.9px"><span class="n" style="left:178px;letter-spacing:0.233px">url</span><span class="c" style="left:190.9px">=</span><span class="a" style="left:198.6px;letter-spacing:0.000px">{array}</span><span class="c" style="left:224.5px">[2]</span></div>
<svg style="left:156.6px;top:599.0px" width="4" height="6" viewBox="0 0 4 6"><path d="M0.4 0.3L3.2 3L0.4 5.7" stroke="#bcbec0" stroke-width="1" fill="none"/></svg>
<svg style="left:167px;top:598.0px" width="9" height="9" viewBox="0 0 9 9"><path d="M0.8 0V8.6" stroke="#8e9193" stroke-width="1.3" stroke-dasharray="2 1.2"/><rect x="3" y="0.2" width="5.4" height="2" fill="#3d9bc6"/><rect x="3" y="3.3" width="5.4" height="2" fill="#3d9bc6"/><rect x="3" y="6.4" width="5.4" height="2" fill="#3d9bc6"/></svg>
<div class="row" style="left:0;top:596.5px"><span class="n" style="left:178px;letter-spacing:0.218px">zipdl</span><span class="c" style="left:198.8px">=</span><span class="a" style="left:206.5px;letter-spacing:0.000px">{array}</span><span class="c" style="left:232.4px">[2]</span></div>
<svg style="left:155.2px;top:610.6px" width="9" height="9" viewBox="0 0 9 9"><path d="M0.8 0V8.6" stroke="#8e9193" stroke-width="1.3" stroke-dasharray="2 1.2"/><rect x="3" y="0.2" width="5.4" height="2" fill="#3d9bc6"/><rect x="3" y="3.3" width="5.4" height="2" fill="#3d9bc6"/><rect x="3" y="6.4" width="5.4" height="2" fill="#3d9bc6"/></svg>
<div class="abs" style="left:138px;top:215px;width:141px;height:393px;border:2px solid #e3261f;border-radius:1px"></div>
<div id="wm">
<span style="left:476.4px;top:-13.3px">零组资料文库</span>
<span style="left:560.4px;top:-1.8px">零组资料文库</span>
<span style="left:644.4px;top:9.7px">零组资料文库</span>
<span style="left:728.4px;top:21.2px">零组资料文库</span>
<span style="left:812.4px;top:32.7px">零组资料文库</span>
<span style="left:-57.6px;top:-10.3px">零组资料文库</span>
<span style="left:26.4px;top:1.2px">零组资料文库</span>
<span style="left:110.4px;top:12.7px">零组资料文库</span>
<span style="left:194.4px;top:24.2px">零组资料文库</span>
<span style="left:278.4px;top:35.7px">零组资料文库</span>
<span style="left:362.4px;top:47.2px">零组资料文库</span>
<span style="left:446.4px;top:58.7px">零组资料文库</span>
<span style="left:530.4px;top:70.2px">零组资料文库</span>
<span style="left:614.4px;top:81.7px">零组资料文库</span>
<span style="left:698.4px;top:93.2px">零组资料文库</span>
<span style="left:782.4px;top:104.7px">零组资料文库</span>
<span style="left:-87.6px;top:61.7px">零组资料文库</span>
<span style="left:-3.6px;top:73.2px">零组资料文库</span>
<span style="left:80.4px;top:84.7px">零组资料文库</span>
<span style="left:164.4px;top:96.2px">零组资料文库</span>
<span style="left:248.4px;top:107.7px">零组资料文库</span>
<span style="left:332.4px;top:119.2px">零组资料文库</span>
<span style="left:416.4px;top:130.7px">零组资料文库</span>
<span style="left:500.4px;top:142.2px">零组资料文库</span>
<span style="left:584.4px;top:153.7px">零组资料文库</span>
<span style="left:668.4px;top:165.2px">零组资料文库</span>
<span style="left:752.4px;top:176.7px">零组资料文库</span>
<span style="left:-33.6px;top:145.2px">零组资料文库</span>
<span style="left:50.4px;top:156.7px">零组资料文库</span>
<span style="left:134.4px;top:168.2px">零组资料文库</span>
<span style="left:218.4px;top:179.7px">零组资料文库</span>
<span style="left:302.4px;top:191.2px">零组资料文库</span>
<span style="left:386.4px;top:202.7px">零组资料文库</span>
<span style="left:470.4px;top:214.2px">零组资料文库</span>
<span style="left:554.4px;top:225.7px">零组资料文库</span>
<span style="left:638.4px;top:237.2px">零组资料文库</span>
<span style="left:722.4px;top:248.7px">零组资料文库</span>
<span style="left:806.4px;top:260.2px">零组资料文库</span>
<span style="left:-63.6px;top:217.2px">零组资料文库</span>
<span style="left:20.4px;top:228.7px">零组资料文库</span>
<span style="left:104.4px;top:240.2px">零组资料文库</span>
<span style="left:188.4px;top:251.7px">零组资料文库</span>
<span style="left:272.4px;top:263.2px">零组资料文库</span>
<span style="left:356.4px;top:274.7px">零组资料文库</span>
<span style="left:440.4px;top:286.2px">零组资料文库</span>
<span style="left:524.4px;top:297.7px">零组资料文库</span>
<span style="left:608.4px;top:309.2px">零组资料文库</span>
<span style="left:692.4px;top:320.7px">零组资料文库</span>
<span style="left:776.4px;top:332.2px">零组资料文库</span>
<span style="left:-93.6px;top:289.2px">零组资料文库</span>
<span style="left:-9.6px;top:300.7px">零组资料文库</span>
<span style="left:74.4px;top:312.2px">零组资料文库</span>
<span style="left:158.4px;top:323.7px">零组资料文库</span>
<span style="left:242.4px;top:335.2px">零组资料文库</span>
<span style="left:326.4px;top:346.7px">零组资料文库</span>
<span style="left:410.4px;top:358.2px">零组资料文库</span>
<span style="left:494.4px;top:369.7px">零组资料文库</span>
<span style="left:578.4px;top:381.2px">零组资料文库</span>
<span style="left:662.4px;top:392.7px">零组资料文库</span>
<span style="left:746.4px;top:404.2px">零组资料文库</span>
<span style="left:-39.6px;top:372.7px">零组资料文库</span>
<span style="left:44.4px;top:384.2px">零组资料文库</span>
<span style="left:128.4px;top:395.7px">零组资料文库</span>
<span style="left:212.4px;top:407.2px">零组资料文库</span>
<span style="left:296.4px;top:418.7px">零组资料文库</span>
<span style="left:380.4px;top:430.2px">零组资料文库</span>
<span style="left:464.4px;top:441.7px">零组资料文库</span>
<span style="left:548.4px;top:453.2px">零组资料文库</span>
<span style="left:632.4px;top:464.7px">零组资料文库</span>
<span style="left:716.4px;top:476.2px">零组资料文库</span>
<span style="left:800.4px;top:487.7px">零组资料文库</span>
<span style="left:-69.6px;top:444.7px">零组资料文库</span>
<span style="left:14.4px;top:456.2px">零组资料文库</span>
<span style="left:98.4px;top:467.7px">零组资料文库</span>
<span style="left:182.4px;top:479.2px">零组资料文库</span>
<span style="left:266.4px;top:490.7px">零组资料文库</span>
<span style="left:350.4px;top:502.2px">零组资料文库</span>
<span style="left:434.4px;top:513.7px">零组资料文库</span>
<span style="left:518.4px;top:525.2px">零组资料文库</span>
<span style="left:602.4px;top:536.7px">零组资料文库</span>
<span style="left:686.4px;top:548.2px">零组资料文库</span>
<span style="left:770.4px;top:559.7px">零组资料文库</span>
<span style="left:-99.6px;top:516.7px">零组资料文库</span>
<span style="left:-15.6px;top:528.2px">零组资料文库</span>
<span style="left:68.4px;top:539.7px">零组资料文库</span>
<span style="left:152.4px;top:551.2px">零组资料文库</span>
<span style="left:236.4px;top:562.7px">零组资料文库</span>
<span style="left:320.4px;top:574.2px">零组资料文库</span>
<span style="left:404.4px;top:585.7px">零组资料文库</span>
<span style="left:488.4px;top:597.2px">零组资料文库</span>
<span style="left:572.4px;top:608.7px">零组资料文库</span>
<span style="left:656.4px;top:620.2px">零组资料文库</span>
<span style="left:740.4px;top:631.7px">零组资料文库</span>
<span style="left:-45.6px;top:600.2px">零组资料文库</span>
<span style="left:38.4px;top:611.7px">零组资料文库</span>
<span style="left:122.4px;top:623.2px">零组资料文库</span>
<span style="left:206.4px;top:634.7px">零组资料文库</span>
<span style="left:290.4px;top:646.2px">零组资料文库</span>
<span style="left:374.4px;top:657.7px">零组资料文库</span>
</div>
<div class="abs" style="left:672px;top:595.5px;font-size:9px;line-height:12px;color:#e6e6e6;white-space:pre">安全客<span style="letter-spacing:0.3px"> ( www.anquanke.com )</span></div>
</div>
</body>
</html>
